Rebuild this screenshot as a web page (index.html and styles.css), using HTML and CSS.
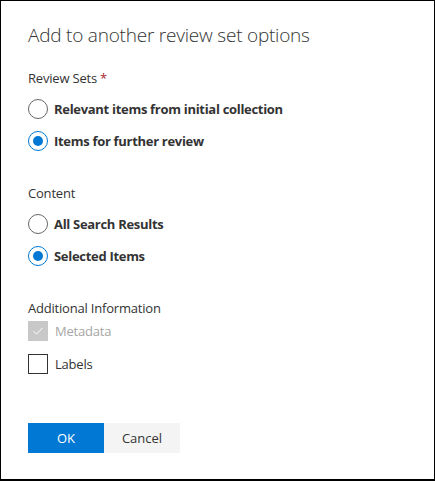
FILE: index.html
```html
<!DOCTYPE html>
<html>
<head>
<meta charset="utf-8">
<link rel="stylesheet" href="styles.css">
</head>
<body>
<div class="dialog">
  <h1 class="title">Add to another review set options</h1>

  <div class="section first">
    <div class="label">Review Sets <span class="req">*</span></div>
    <div class="options">
      <div class="radio"><span class="circle"></span><span class="rtext">Relevant items from initial collection</span></div>
      <div class="radio"><span class="circle on"></span><span class="rtext">Items for further review</span></div>
    </div>
  </div>

  <div class="section">
    <div class="label">Content</div>
    <div class="options">
      <div class="radio"><span class="circle"></span><span class="rtext">All Search Results</span></div>
      <div class="radio"><span class="circle on"></span><span class="rtext">Selected Items</span></div>
    </div>
  </div>

  <div class="section">
    <div class="label">Additional Information</div>
    <div class="checks">
      <div class="check disabled"><span class="box"><svg width="12" height="12" viewBox="0 0 12 12"><path d="M1.5 6.2 L4.5 9.2 L10.5 2.8" fill="none" stroke="#fff" stroke-width="1"/></svg></span><span class="ctext">Metadata</span></div>
      <div class="check"><span class="box"></span><span class="ctext">Labels</span></div>
    </div>
  </div>

  <div class="actions">
    <button class="btn primary">OK</button>
    <button class="btn">Cancel</button>
  </div>
</div>
</body>
</html>
```
FILE: styles.css
```css
html, body {
  margin: 0;
  padding: 0;
  background: #fff;
}
body {
  font-family: "Open Sans", "Noto Sans", sans-serif;
  color: #333;
}
.dialog {
  box-sizing: border-box;
  width: 435px;
  height: 481px;
  border: 1px solid #000;
  border-bottom-width: 2px;
  padding: 20px 27px 0;
  display: flex;
  flex-direction: column;
}
.title {
  margin: 0;
  font-size: 19px;
  font-weight: 300;
  line-height: 28px;
  color: #333;
  letter-spacing: -0.22px;
}
.section {
  margin-top: 32px;
}
.section.first {
  margin-top: 19px;
}
.label {
  font-size: 13px;
  line-height: 20px;
  color: #333;
  letter-spacing: -0.2px;
}
.req {
  color: #a4262c;
}
.options {
  margin-top: 11px;
  display: flex;
  flex-direction: column;
  gap: 12px;
}
.radio {
  display: flex;
  align-items: center;
  height: 20px;
  gap: 6px;
}
.circle {
  box-sizing: border-box;
  width: 20px;
  height: 20px;
  border-radius: 50%;
  border: 1px solid #666;
  position: relative;
  flex: none;
}
.circle.on {
  border-color: #0078d4;
}
.circle.on::after {
  content: "";
  position: absolute;
  left: 4px;
  top: 4px;
  width: 10px;
  height: 10px;
  border-radius: 50%;
  background: #0078d4;
}
.rtext {
  font-size: 13px;
  font-weight: 700;
  line-height: 20px;
  color: #333;
  letter-spacing: -0.3px;
}
.checks {
  margin-top: 3px;
  display: flex;
  flex-direction: column;
  gap: 13px;
}
.check {
  display: flex;
  align-items: center;
  height: 20px;
  gap: 7px;
}
.box {
  box-sizing: border-box;
  width: 20px;
  height: 20px;
  border: 1px solid #333;
  display: flex;
  align-items: center;
  justify-content: center;
  flex: none;
}
.check.disabled .box {
  background: #c8c8c8;
  border-color: #c8c8c8;
}
.ctext {
  font-size: 13px;
  line-height: 20px;
  color: #333;
  letter-spacing: -0.2px;
}
.check.disabled .ctext {
  color: #a6a6a6;
}
.actions {
  margin-top: 49px;
  display: flex;
}
.btn {
  width: 76px;
  height: 30px;
  border: none;
  margin: 0;
  padding: 0;
  font-family: inherit;
  font-size: 13px;
  background: #f4f4f4;
  color: #333;
}
.btn.primary {
  background: #0078d4;
  color: #fff;
}
```
